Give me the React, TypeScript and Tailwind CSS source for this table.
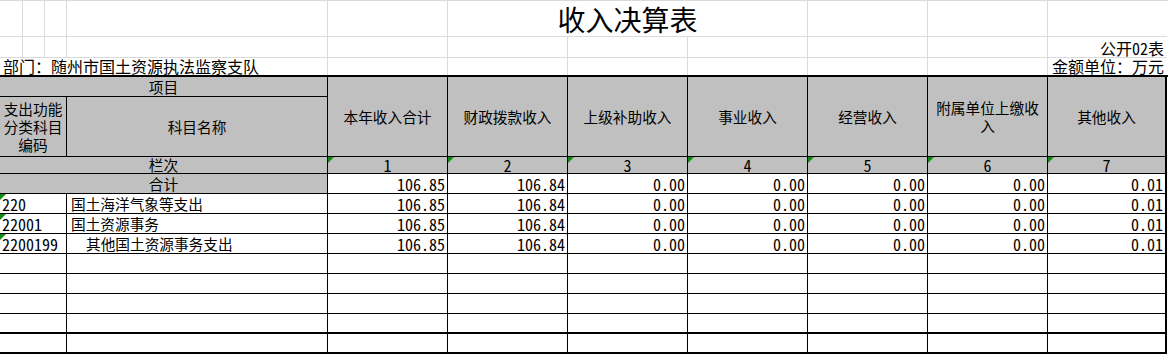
import React from "react";

const CJK = "font-['Noto_Sans_CJK_SC','Noto_Sans_CJK_JP',sans-serif]";
const MONO = "font-['Noto_Sans_Mono_CJK_SC','Liberation_Mono',monospace]";

const Tri = () => (
  <span className="absolute left-0 top-0 h-0 w-0 border-t-[6px] border-r-[6px] border-t-[#128a12] border-r-transparent" />
);

const headers = [
  "本年收入合计",
  "财政拨款收入",
  "上级补助收入",
  "事业收入",
  "经营收入",
  "附属单位上缴收入",
  "其他收入",
];

const values = ["106.85", "106.84", "0.00", "0.00", "0.00", "0.00", "0.01"];

const rows = [
  { code: "220", name: "国土海洋气象等支出", indent: false },
  { code: "22001", name: "国土资源事务", indent: false },
  { code: "2200199", name: "其他国土资源事务支出", indent: true },
];

const cell = "relative border-b border-r border-black";
const gray = "bg-[#c0c0c0]";

function ValueCells({ vals }: { vals: string[] }) {
  return (
    <>
      {vals.map((v, i) => (
        <div
          key={i}
          className={`${cell} ${i === 6 ? "border-r-2" : ""} flex items-end justify-end pr-[2px] ${MONO} text-[16px] leading-[18px]`}
        >
          {v}
        </div>
      ))}
    </>
  );
}

function EmptyRow({ thick }: { thick?: boolean }) {
  const b = thick ? "border-b-2" : "";
  return (
    <>
      <div className={`${cell} ${b}`} />
      <div className={`${cell} ${b}`} />
      {values.map((_, i) => (
        <div key={i} className={`${cell} ${b} ${i === 6 ? "border-r-2" : ""}`} />
      ))}
    </>
  );
}

export default function App() {
  const lg = "border-[#dadada]";
  const topCols =
    "grid grid-cols-[23px_22px_22px_261px_120px_120px_120px_120px_120px_120px_119px] grid-rows-[36px_21px_17px]";
  return (
    <div className={`w-[1168px] h-[354px] overflow-hidden bg-white text-black ${CJK}`}>
      {/* top sheet area */}
      <div className={`${topCols} border-t ${lg}`}>
        {/* row A */}
        <div className={`border-r border-b ${lg}`} />
        <div className={`border-r border-b ${lg}`} />
        <div className={`border-r border-b ${lg}`} />
        <div className={`border-r border-b ${lg}`} />
        <div className={`border-r border-b ${lg}`} />
        <div className={`col-span-3 border-r border-b ${lg} flex items-end justify-center text-[28px] leading-[34px]`}>
          收入决算表
        </div>
        <div className={`border-r border-b ${lg}`} />
        <div className={`border-r border-b ${lg}`} />
        <div className={`border-b ${lg}`} />
        {/* row B */}
        <div className={`border-r border-b ${lg}`} />
        <div className={`border-r border-b ${lg}`} />
        <div className={`border-r border-b ${lg}`} />
        <div className={`border-r border-b ${lg}`} />
        <div className={`border-r border-b ${lg}`} />
        <div className={`border-r border-b ${lg}`} />
        <div className={`border-r border-b ${lg}`} />
        <div className={`border-r border-b ${lg}`} />
        <div className={`border-r border-b ${lg}`} />
        <div className={`border-r border-b ${lg}`} />
        <div className={`border-b ${lg} flex items-end justify-end pr-[3px] ${MONO} text-[16px] leading-[18px] whitespace-nowrap`}>
          公开02表
        </div>
        {/* row C */}
        <div className={`col-span-4 border-r ${lg} flex items-end pl-[3px] text-[16px] leading-[17px] whitespace-nowrap`}>
          部门：随州市国土资源执法监察支队
        </div>
        <div className={`border-r ${lg}`} />
        <div className={`border-r ${lg}`} />
        <div className={`border-r ${lg}`} />
        <div className={`border-r ${lg}`} />
        <div className={`border-r ${lg}`} />
        <div className={`border-r ${lg}`} />
        <div className="flex items-end justify-end pr-[3px] text-[16px] leading-[17px] whitespace-nowrap">
          金额单位：万元
        </div>
      </div>

      {/* table */}
      <div className="grid grid-cols-[67px_261px_120px_120px_120px_120px_120px_120px_119px] grid-rows-[20px_60px_17px_20px_20px_20px_20px_20px_20px_20px_20px_20px] border-t-2 border-black text-[14.67px]">
        {/* row 1 */}
        <div className={`${cell} ${gray} col-span-2 flex items-center justify-center leading-[18px]`}>项目</div>
        {headers.map((h, i) => (
          <div
            key={h}
            className={`${cell} ${gray} ${i === 6 ? "border-r-2" : ""} row-span-2 flex items-center justify-center px-[4px] text-center leading-[18px]`}
          >
            {h}
          </div>
        ))}
        {/* row 2 */}
        <div className={`${cell} ${gray} flex items-center justify-center text-center leading-[18px] px-[1px]`}>
          支出功能分类科目编码
        </div>
        <div className={`${cell} ${gray} flex items-center justify-center leading-[18px]`}>科目名称</div>
        {/* 栏次 row */}
        <div className={`${cell} ${gray} col-span-2 flex items-end justify-center leading-[16px]`}>栏次</div>
        {values.map((_, i) => (
          <div
            key={i}
            className={`${cell} ${gray} ${i === 6 ? "border-r-2" : ""} flex items-end justify-center ${MONO} text-[16px] leading-[16px]`}
          >
            <Tri />
            {i + 1}
          </div>
        ))}
        {/* 合计 row */}
        <div className={`${cell} ${gray} col-span-2 flex items-end justify-center leading-[18px]`}>合计</div>
        <ValueCells vals={values} />
        {/* data rows */}
        {rows.map((r) => (
          <React.Fragment key={r.code}>
            <div className={`${cell} flex items-end pl-[2px] ${MONO} text-[16px] leading-[18px]`}>
              <Tri />
              {r.code}
            </div>
            <div className={`${cell} flex items-end ${r.indent ? "pl-[19px]" : "pl-[4px]"} leading-[18px] whitespace-nowrap`}>
              {r.name}
            </div>
            <ValueCells vals={values} />
          </React.Fragment>
        ))}
        <EmptyRow />
        <EmptyRow />
        <EmptyRow />
        <EmptyRow thick />
        <EmptyRow thick />
      </div>
    </div>
  );
}
